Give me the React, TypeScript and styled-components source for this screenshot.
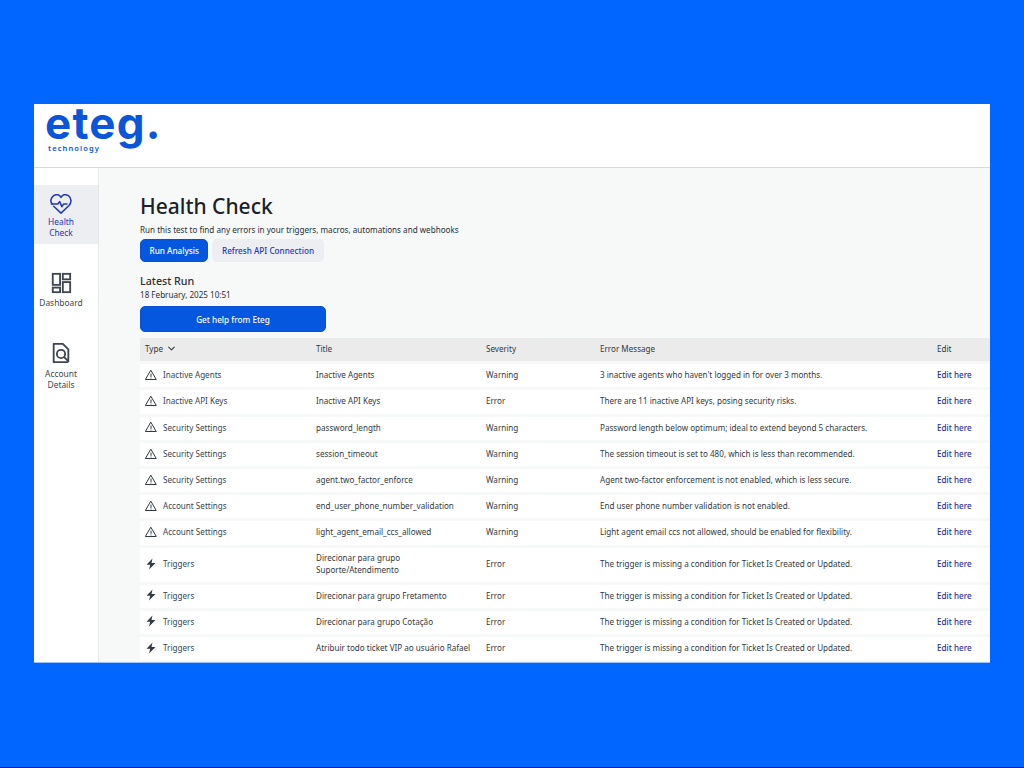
import styled, { createGlobalStyle } from "styled-components";
import { ChevronDown } from "lucide-react";

const GlobalStyle = createGlobalStyle`
    html, body {
        margin: 0;
        padding: 0;
        height: 100%;
        background: #0066ff;
    }
    body {
        font-family: "Noto Sans", "Open Sans", sans-serif;
    }
`;

const Page = styled.div`
    height: 768px;
    padding: 104px 34px 0;
    box-sizing: border-box;
    overflow: hidden;
    border-bottom: 1px solid #10203a;
`;
const Frame = styled.div`
    width: 956px;
    height: 558px;
    background: #fff;
    display: flex;
    flex-direction: column;
    box-shadow: 0 1px 0 #9cc3fb;
`;
const Header = styled.header`
    height: 63px;
    flex: none;
    border-bottom: 1px solid #d8d9db;
    padding-left: 11px;
    display: flex;
    flex-direction: column;
`;
const LogoMark = styled.div`
    font-family: "Inter", sans-serif;
    font-weight: 700;
    font-size: 44px;
    line-height: 38px;
    letter-spacing: 1.2px;
    color: #0b55d9;
`;
const LogoSub = styled.div`
    font-size: 7.5px;
    line-height: 9px;
    font-weight: 600;
    letter-spacing: 1.1px;
    color: #0b55d9;
    margin: 2px 0 0 3px;
`;
const Body = styled.div`
    flex: 1;
    min-height: 0;
    display: flex;
    overflow: hidden;
`;
const Sidebar = styled.nav`
    width: 64px;
    flex: none;
    border-right: 1px solid #e6e7e9;
    padding-top: 17px;
    display: flex;
    flex-direction: column;
    gap: 21px;
`;
const NavItem = styled.div<{ $active?: boolean }>`
    display: flex;
    flex-direction: column;
    align-items: center;
    padding: 7px 14px 6px 4px;
    background: ${(p) => (p.$active ? "#eceef2" : "transparent")};
    color: ${(p) => (p.$active ? "#2238b8" : "#3f4650")};
    font-size: 8.4px;
    line-height: 11px;
    text-align: center;
`;
const NavIcon = styled.svg<{ $gap?: number }>`
    width: 22px;
    height: 22px;
    flex: none;
    margin-bottom: ${(p) => p.$gap ?? 2}px;
`;
const Main = styled.main`
    flex: 1;
    min-width: 0;
    background: #f7f8f8;
    padding: 25px 0 0 41px;
`;
const Title = styled.h1`
    margin: 0;
    font-size: 21px;
    line-height: 26px;
    font-weight: 500;
    color: #1c2228;
`;
const Lead = styled.p`
    margin: 5px 0 0;
    font-size: 8.1px;
    line-height: 12px;
    color: #2a3037;
`;
const Actions = styled.div`
    display: flex;
    gap: 4px;
    margin-top: 3px;
`;
const Button = styled.button<{ $wide?: boolean; $ghost?: boolean }>`
    height: 23px;
    padding: 0 8.5px;
    width: ${(p) => (p.$wide ? "186px" : "auto")};
    border-radius: 5px;
    font-family: inherit;
    font-size: 8.2px;
    font-weight: 500;
    background: ${(p) => (p.$ghost ? "#eceef2" : "#0557e0")};
    color: ${(p) => (p.$ghost ? "#1a3ac4" : "#fff")};
    border: 1px solid ${(p) => (p.$ghost ? "#eceef2" : "#0a50d0")};
`;
const RunHeading = styled.h2`
    margin: 12px 0 0;
    font-size: 10.7px;
    line-height: 14px;
    font-weight: 500;
    color: #2a2f36;
`;
const RunDate = styled.div`
    margin-top: 1px;
    font-size: 8.1px;
    line-height: 12px;
    color: #2a3037;
`;
const HelpRow = styled.div`
    margin-top: 5px;
    display: flex;
`;
const HelpButton = styled(Button)`
    height: 26px;
`;
const Table = styled.div`
    margin-top: 6px;
    display: flex;
    flex-direction: column;
    gap: 3px;
`;
const Row = styled.div<{ $head?: boolean; $tall?: boolean }>`
    display: grid;
    grid-template-columns: 176px 170px 114px 337px 53px;
    align-items: center;
    box-sizing: border-box;
    padding-bottom: 1.6px;
    height: ${(p) => (p.$tall ? "34px" : "23.2px")};
    background: ${(p) => (p.$head ? "#ebebeb" : "#fff")};
    font-size: 8.1px;
    line-height: 11.5px;
    color: #333a42;
    flex: none;
`;
const Cell = styled.div`
    min-width: 0;
    white-space: pre-line;
`;
const TypeCell = styled(Cell)`
    padding-left: 5px;
    display: flex;
    align-items: center;
    color: #37454f;
`;
const TypeIcon = styled.span`
    width: 12px;
    height: 12px;
    margin-right: 6px;
    display: inline-flex;
    align-items: center;
    justify-content: center;
    color: #333a42;
`;
const HeadSort = styled(Cell)`
    padding-left: 5px;
    display: flex;
    align-items: center;
    gap: 3px;
`;
const EditLink = styled.a`
    color: #2b2f9a;
    font-weight: 500;
`;

const WarnIcon = () => (
    <svg width="12" height="12" viewBox="0 0 24 24" fill="none" stroke="currentColor" strokeWidth="2" strokeLinejoin="round" strokeLinecap="round">
        <path d="M12 3 L22.5 21 H1.5 Z" />
        <path d="M12 10v5" />
        <path d="M12 18v.2" />
    </svg>
);

const BoltIcon = () => (
    <svg width="12" height="12" viewBox="0 0 24 24" fill="currentColor">
        <path d="M15 1 L3 13.5 H10.5 L8 23 L21 10 H13 Z" />
    </svg>
);

type Issue = { kind: "warn" | "bolt"; type: string; title: string; severity: string; message: string };

const rows: Issue[] = [
    { kind: "warn", type: "Inactive Agents", title: "Inactive Agents", severity: "Warning", message: "3 inactive agents who haven't logged in for over 3 months." },
    { kind: "warn", type: "Inactive API Keys", title: "Inactive API Keys", severity: "Error", message: "There are 11 inactive API keys, posing security risks." },
    { kind: "warn", type: "Security Settings", title: "password_length", severity: "Warning", message: "Password length below optimum; ideal to extend beyond 5 characters." },
    { kind: "warn", type: "Security Settings", title: "session_timeout", severity: "Warning", message: "The session timeout is set to 480, which is less than recommended." },
    { kind: "warn", type: "Security Settings", title: "agent.two_factor_enforce", severity: "Warning", message: "Agent two-factor enforcement is not enabled, which is less secure." },
    { kind: "warn", type: "Account Settings", title: "end_user_phone_number_validation", severity: "Warning", message: "End user phone number validation is not enabled." },
    { kind: "warn", type: "Account Settings", title: "light_agent_email_ccs_allowed", severity: "Warning", message: "Light agent email ccs not allowed, should be enabled for flexibility." },
    { kind: "bolt", type: "Triggers", title: "Direcionar para grupo\nSuporte/Atendimento", severity: "Error", message: "The trigger is missing a condition for Ticket Is Created or Updated." },
    { kind: "bolt", type: "Triggers", title: "Direcionar para grupo Fretamento", severity: "Error", message: "The trigger is missing a condition for Ticket Is Created or Updated." },
    { kind: "bolt", type: "Triggers", title: "Direcionar para grupo Cotação", severity: "Error", message: "The trigger is missing a condition for Ticket Is Created or Updated." },
    { kind: "bolt", type: "Triggers", title: "Atribuir todo ticket VIP ao usuário Rafael", severity: "Error", message: "The trigger is missing a condition for Ticket Is Created or Updated." },
];

export default function App() {
    return (
        <>
            <GlobalStyle />
            <Page>
                <Frame>
                    <Header>
                        <LogoMark>eteg.</LogoMark>
                        <LogoSub>technology</LogoSub>
                    </Header>
                    <Body>
                        <Sidebar>
                            <NavItem $active>
                                <NavIcon viewBox="0 0 24 24" fill="none" stroke="currentColor" strokeWidth="1.7" strokeLinecap="round" strokeLinejoin="round">
                                    <path d="M4 15.5 L12 23 L20.5 15 C24 11.5 23.5 6.5 20 4 C17 2 13.5 3 12 6 C10.5 3 7 2 4 4 C0.5 6.5 0 11 2.5 13" />
                                    <path d="M1.5 13 H8.5 L10.5 10.5 L13 16 L15 13 H18.5" />
                                </NavIcon>
                                Health Check
                            </NavItem>
                            <NavItem>
                                <NavIcon $gap={3} viewBox="0 0 24 24" fill="none" stroke="currentColor" strokeWidth="2">
                                    <rect x="3" y="2" width="8" height="12" />
                                    <rect x="14" y="2" width="8" height="6" />
                                    <rect x="14" y="11" width="8" height="11" />
                                    <rect x="3" y="17" width="8" height="5" />
                                </NavIcon>
                                Dashboard
                            </NavItem>
                            <NavItem>
                                <NavIcon $gap={4} viewBox="0 0 24 24" fill="none" stroke="currentColor" strokeWidth="2" strokeLinejoin="round" strokeLinecap="round">
                                    <path d="M20 21 V8 L14 2 H4 V22 H19" />
                                    <circle cx="12" cy="13" r="4.5" />
                                    <path d="M15.5 16.5 L19 20" />
                                </NavIcon>
                                Account Details
                            </NavItem>
                        </Sidebar>
                        <Main>
                            <Title>Health Check</Title>
                            <Lead>Run this test to find any errors in your triggers, macros, automations and webhooks</Lead>
                            <Actions>
                                <Button>Run Analysis</Button>
                                <Button $ghost>Refresh API Connection</Button>
                            </Actions>
                            <RunHeading>Latest Run</RunHeading>
                            <RunDate>18 February, 2025 10:51</RunDate>
                            <HelpRow>
                                <HelpButton $wide>Get help from Eteg</HelpButton>
                            </HelpRow>
                            <Table>
                                <Row $head>
                                    <HeadSort>Type <ChevronDown size={11} strokeWidth={2.4} /></HeadSort>
                                    <Cell>Title</Cell>
                                    <Cell>Severity</Cell>
                                    <Cell>Error Message</Cell>
                                    <Cell>Edit</Cell>
                                </Row>
                                {rows.map((r) => (
                                    <Row key={r.title} $tall={r.title.includes("\n")}>
                                        <TypeCell>
                                            <TypeIcon>{r.kind === "warn" ? <WarnIcon /> : <BoltIcon />}</TypeIcon>
                                            {r.type}
                                        </TypeCell>
                                        <Cell>{r.title}</Cell>
                                        <Cell>{r.severity}</Cell>
                                        <Cell>{r.message}</Cell>
                                        <EditLink>Edit here</EditLink>
                                    </Row>
                                ))}
                            </Table>
                        </Main>
                    </Body>
                </Frame>
            </Page>
        </>
    );
}
